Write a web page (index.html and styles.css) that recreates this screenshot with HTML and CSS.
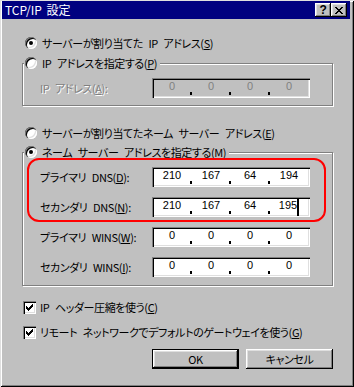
FILE: index.html
```html
<!DOCTYPE html>
<html lang="ja">
<head>
    <meta charset="UTF-8">
    <title>TCP/IP 設定</title>
    <link rel="stylesheet" href="styles.css">
</head>
<body>
    <div class="window">
        <!-- Title bar -->
        <div class="titlebar">
            <span class="title">TCP/IP 設定</span>
            <div class="caption-buttons">
                <span class="cap-btn help">?</span>
                <span class="cap-btn close">
                    <svg width="8" height="7" viewBox="0 0 8 7" shape-rendering="crispEdges">
                        <path d="M0 0h2v1h-2z M6 0h2v1h-2z M1 1h2v1h-2z M5 1h2v1h-2z M2 2h4v1h-4z M3 3h2v1h-2z M2 4h4v1h-4z M1 5h2v1h-2z M5 5h2v1h-2z M0 6h2v1h-2z M6 6h2v1h-2z" fill="#000"/>
                    </svg>
                </span>
            </div>
        </div>

        <div class="content">
            <div class="option"><span class="radio on"></span><span>サーバーが割り当てた IP アドレス(<u>S</u>)</span></div>

            <div class="group">
                <div class="option caption"><span class="radio"></span><span>IP アドレスを指定する(<u>P</u>)</span></div>
                <div class="fields">
                    <div class="field disabled">
                        <span class="label">IP アドレス(<u>A</u>):</span>
                        <div class="ip">
                            <span class="seg">0</span><span class="dot"></span>
                            <span class="seg">0</span><span class="dot"></span>
                            <span class="seg">0</span><span class="dot"></span>
                            <span class="seg">0</span>
                        </div>
                    </div>
                </div>
            </div>

            <div class="option third"><span class="radio"></span><span>サーバーが割り当てたネーム サーバー アドレス(<u>E</u>)</span></div>

            <div class="group dns">
                <div class="option caption"><span class="radio on"></span><span>ネーム サーバー アドレスを指定する(<u>M</u>)</span></div>
                <div class="fields">
                    <div class="field">
                        <span class="label">プライマリ DNS(<u>D</u>):</span>
                        <div class="ip">
                            <span class="seg">210</span><span class="dot"></span>
                            <span class="seg">167</span><span class="dot"></span>
                            <span class="seg">64</span><span class="dot"></span>
                            <span class="seg">194</span>
                        </div>
                    </div>
                    <div class="field">
                        <span class="label">セカンダリ DNS(<u>N</u>):</span>
                        <div class="ip">
                            <span class="seg">210</span><span class="dot"></span>
                            <span class="seg">167</span><span class="dot"></span>
                            <span class="seg">64</span><span class="dot"></span>
                            <span class="seg">195<span class="caret"></span></span>
                        </div>
                    </div>
                    <div class="field">
                        <span class="label">プライマリ WINS(<u>W</u>):</span>
                        <div class="ip">
                            <span class="seg">0</span><span class="dot"></span>
                            <span class="seg">0</span><span class="dot"></span>
                            <span class="seg">0</span><span class="dot"></span>
                            <span class="seg">0</span>
                        </div>
                    </div>
                    <div class="field">
                        <span class="label">セカンダリ WINS(<u>I</u>):</span>
                        <div class="ip">
                            <span class="seg">0</span><span class="dot"></span>
                            <span class="seg">0</span><span class="dot"></span>
                            <span class="seg">0</span><span class="dot"></span>
                            <span class="seg">0</span>
                        </div>
                    </div>
                </div>
                <!-- red annotation round the DNS rows -->
                <div class="highlight"></div>
            </div>

            <div class="check-row first">
                <span class="checkbox"><svg width="7" height="7" viewBox="0 0 7 7" shape-rendering="crispEdges"><path d="M0 2h1v1h1v1h1v-1h1v-1h1v-1h1v-1h1v3h-1v1h-1v1h-1v1h-1v1h-1v-1h-1v-1h-1z" fill="#000"/></svg></span>
                <span>IP ヘッダー圧縮を使う(<u>C</u>)</span>
            </div>
            <div class="check-row">
                <span class="checkbox"><svg width="7" height="7" viewBox="0 0 7 7" shape-rendering="crispEdges"><path d="M0 2h1v1h1v1h1v-1h1v-1h1v-1h1v-1h1v3h-1v1h-1v1h-1v1h-1v1h-1v-1h-1v-1h-1z" fill="#000"/></svg></span>
                <span>リモート ネットワークでデフォルトのゲートウェイを使う(<u>G</u>)</span>
            </div>

            <div class="buttons">
                <span class="btn default">OK</span>
                <span class="btn">キャンセル</span>
            </div>
        </div>
    </div>
</body>
</html>
```

FILE: styles.css
```css
body {
    margin: 0;
    font-family: "Noto Sans CJK JP", sans-serif;
    font-size: 11px;
    font-feature-settings: "palt";
    letter-spacing: -0.4px;
    word-spacing: 3.5px;
    color: #000;
    background: #c0c0c0;
}

.window {
    width: 354px;
    height: 387px;
    box-sizing: border-box;
    padding-top: 1px;
    background: #c0c0c0;
    box-shadow: inset 1px 1px #dfdfdf, inset -1px -1px #000, inset 2px 2px #fff, inset -2px -2px #808080;
}

/* title bar */
.titlebar {
    height: 18px;
    margin: 0 4px 0 2px;
    padding: 0 3px;
    background: #000080;
    color: #fff;
    display: flex;
    align-items: center;
    justify-content: space-between;
}

.title {
    font-size: 12px;
    line-height: 18px;
    letter-spacing: 0;
    word-spacing: 2px;
}

.caption-buttons {
    display: flex;
    gap: 0;
}

.cap-btn {
    width: 16px;
    height: 14px;
    box-sizing: border-box;
    background: #c0c0c0;
    color: #000;
    display: flex;
    align-items: center;
    justify-content: center;
    box-shadow: inset -1px -1px #000, inset 1px 1px #fff, inset -2px -2px #808080, inset 2px 2px #dfdfdf;
}

.help {
    font: bold 12px "Liberation Sans", sans-serif;
}

/* body */
.content {
    padding: 16px 21px 0 22px;
}

.option {
    display: flex;
    align-items: center;
    gap: 5px;
    height: 16px;
    margin-left: 3px;
    white-space: nowrap;
}

.option.third {
    margin-top: 19px;
}

.radio {
    flex: none;
    width: 12px;
    height: 12px;
    border-radius: 50%;
    background: #fff;
    box-shadow: inset 1px 1px #808080, inset 2px 2px #000, inset -1px -1px #fff, inset -2px -2px #dfdfdf;
    display: flex;
    align-items: center;
    justify-content: center;
}

.radio.on::after {
    content: "";
    width: 4px;
    height: 4px;
    border-radius: 50%;
    background: #000;
}

.group {
    position: relative;
    margin-top: 12px;
    padding-bottom: 7px;
    border: 1px solid #808080;
    box-shadow: inset 1px 1px #fff, 1px 1px #fff;
}

.group.dns {
    margin-top: 11px;
    padding-bottom: 8px;
}

.group .caption {
    width: fit-content;
    margin: -9px 0 0 1px;
    padding: 0 3px 0 1px;
    background: #c0c0c0;
}

.fields {
    display: grid;
    gap: 10px;
    padding: 7px 22px 0 17px;
}

.field {
    display: grid;
    grid-template-columns: 112px 158px;
    align-items: center;
    height: 20px;
}

.label {
    white-space: nowrap;
}

.disabled .label {
    color: #808080;
    text-shadow: 1px 1px #fff;
}

.ip {
    display: flex;
    height: 20px;
    box-sizing: border-box;
    padding: 2px 3px 2px 2px;
    background: #fff;
    box-shadow: inset 1px 1px #808080, inset 2px 2px #000, inset -1px -1px #fff, inset -2px -2px #dfdfdf;
}

.disabled .ip {
    background: #c0c0c0;
}

.seg {
    flex: 1;
    text-align: center;
    font: 11px "Liberation Sans", sans-serif;
    letter-spacing: 0;
    line-height: 13px;
}

.disabled .seg {
    color: #808080;
}

.dot {
    flex: none;
    align-self: flex-end;
    width: 2px;
    height: 3px;
    margin: 0 1px 1px 0;
    background: #000;
}

.caret {
    display: inline-block;
    width: 2px;
    height: 17px;
    margin: -10px 0 -7px 0;
    background: #000;
}

.highlight {
    position: absolute;
    left: 4px;
    top: 5px;
    width: 299px;
    height: 64px;
    box-sizing: border-box;
    border: 2px solid #f00;
    border-radius: 12px;
    pointer-events: none;
}

/* check boxes */
.check-row {
    display: flex;
    align-items: center;
    gap: 4px;
    height: 16px;
    margin: 9px 0 0 1px;
    white-space: nowrap;
}

.check-row.first {
    margin-top: 13px;
}

.checkbox {
    flex: none;
    width: 13px;
    height: 13px;
    box-sizing: border-box;
    padding: 3px;
    background: #fff;
    box-shadow: inset 1px 1px #808080, inset 2px 2px #000, inset -1px -1px #fff, inset -2px -2px #dfdfdf;
}

.checkbox svg {
    display: block;
}

/* buttons */
.buttons {
    display: flex;
    justify-content: flex-end;
    gap: 7px;
    margin-top: 9px;
}

.btn {
    width: 87px;
    height: 20px;
    box-sizing: border-box;
    display: flex;
    align-items: center;
    justify-content: center;
    box-shadow: inset -1px -1px #000, inset 1px 1px #fff, inset -2px -2px #808080, inset 2px 2px #dfdfdf;
}

.btn.default {
    border: 1px solid #000;
}
```
